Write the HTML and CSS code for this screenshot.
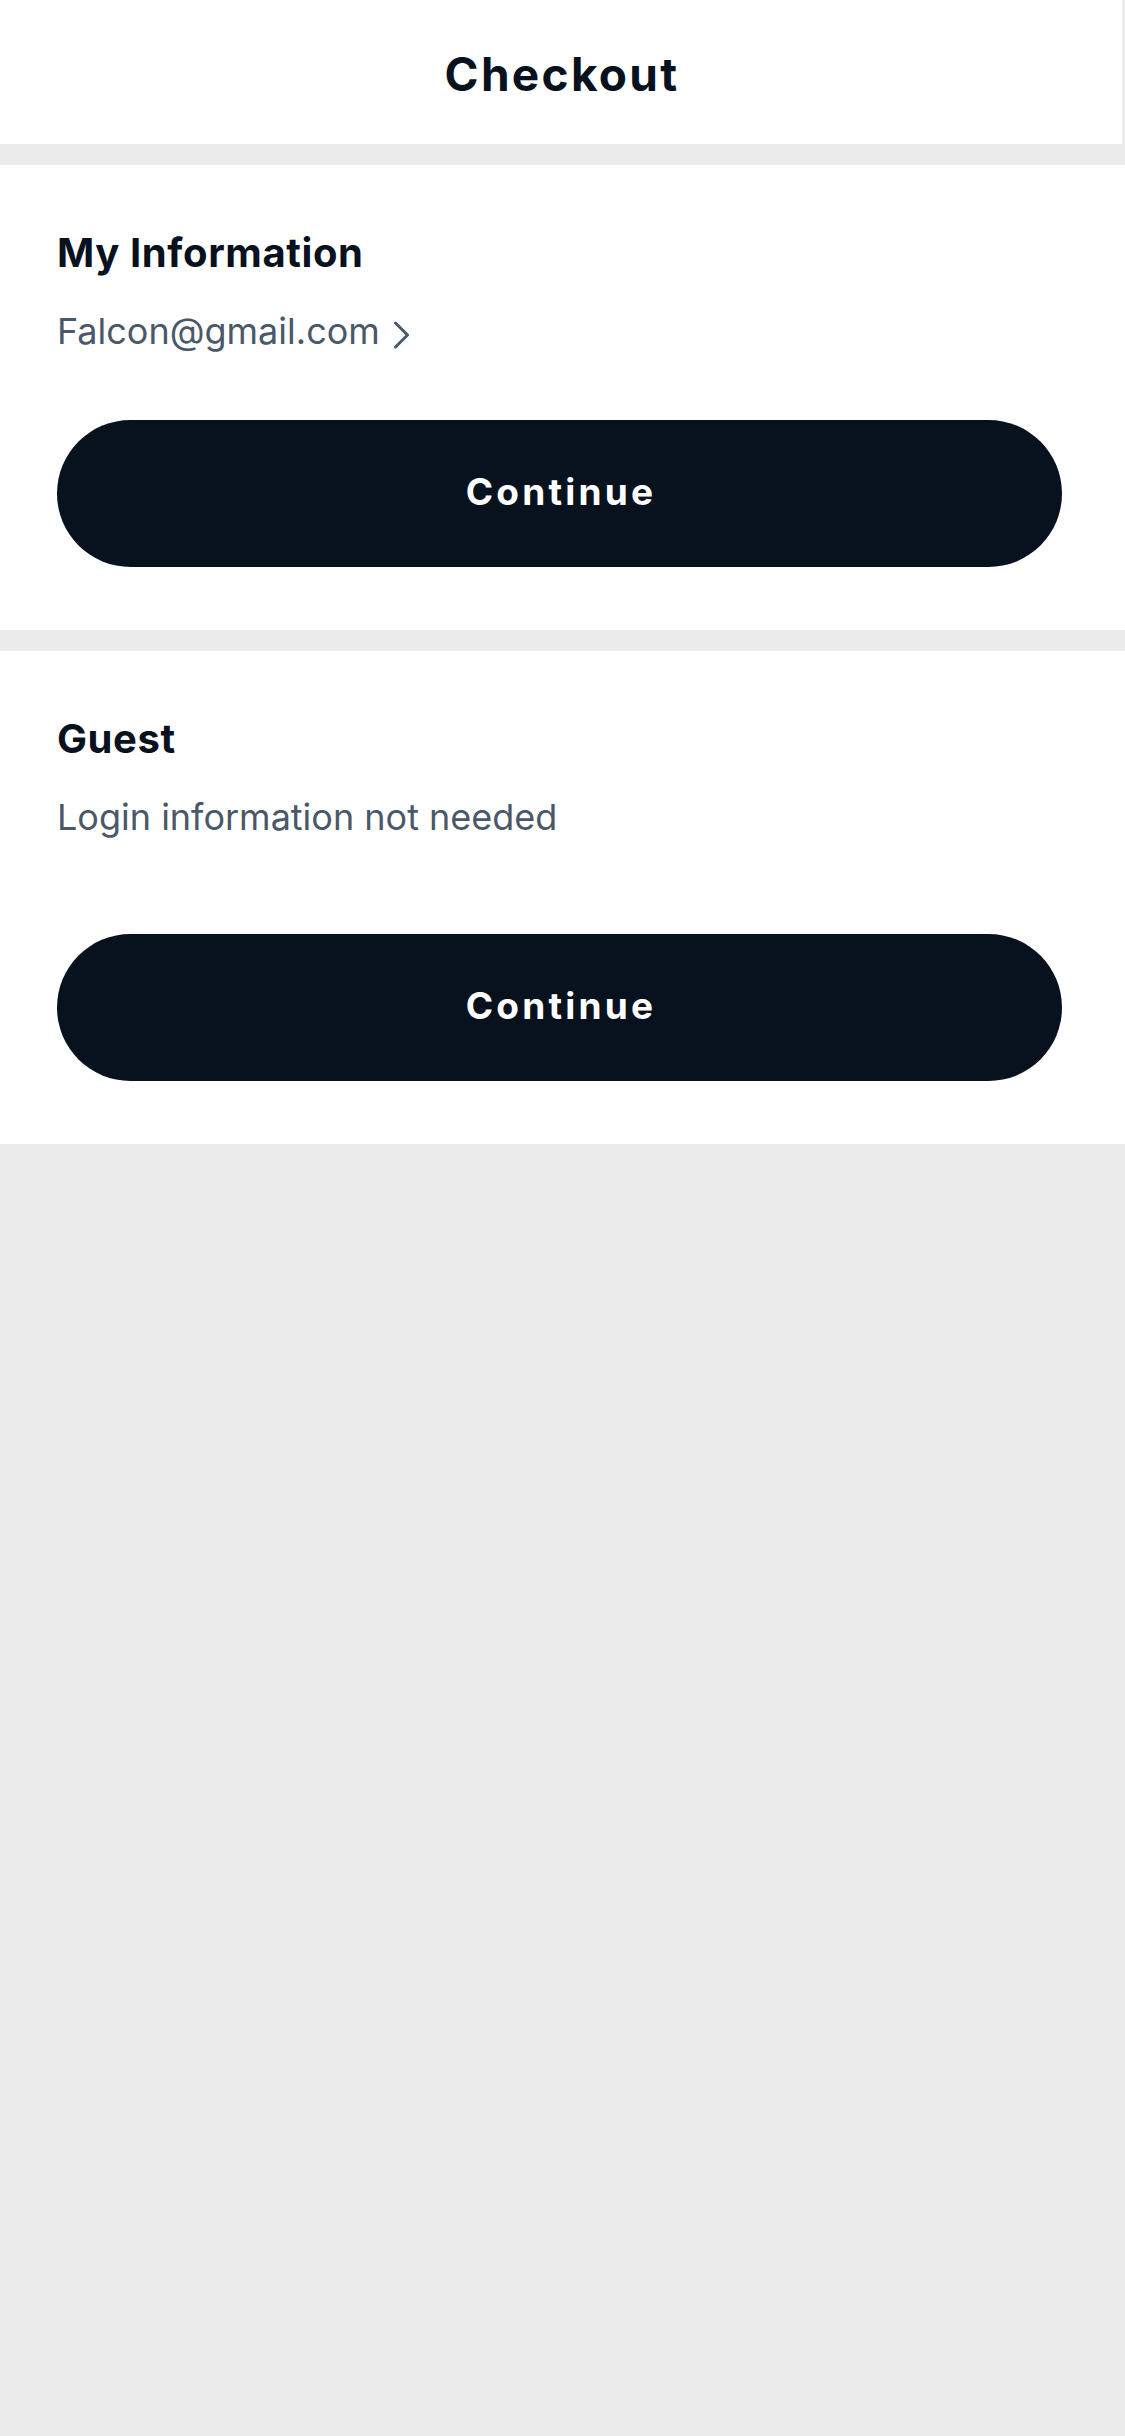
FILE: index.html
```html
<!DOCTYPE html>
<html lang="en">
<head>
<meta charset="utf-8">
<title>Checkout</title>
<link rel="stylesheet" href="styles.css">
</head>
<body>
<header class="topbar">
  <h1 class="topbar-title">Checkout</h1>
</header>
<main class="content">
  <section class="card">
    <h2 class="card-title">My Information</h2>
    <a class="card-link" href="#">
      <span class="card-sub">Falcon@gmail.com</span>
      <svg class="chevron" width="17" height="28" viewBox="0 0 17 28" aria-hidden="true">
        <path d="M2.5 2 L14.5 14 L2.5 26" fill="none" stroke="#4a5869" stroke-width="3" stroke-linecap="round" stroke-linejoin="round"/>
      </svg>
    </a>
    <button class="btn btn-first" type="button">Continue</button>
  </section>
  <section class="card">
    <h2 class="card-title">Guest</h2>
    <p class="card-sub card-sub-plain">Login information not needed</p>
    <button class="btn btn-second" type="button">Continue</button>
  </section>
</main>
</body>
</html>
```
FILE: styles.css
```css
* { box-sizing: border-box; }
html, body {
  margin: 0;
  padding: 0;
}
body {
  background: #ebebeb;
  min-height: 2436px;
  font-family: "Inter", "Noto Sans", sans-serif;
  color: #08121f;
}
.topbar {
  height: 144px;
  margin-right: 3px;
  background: #ffffff;
  display: flex;
  align-items: center;
  justify-content: center;
}
.topbar-title {
  margin: 0;
  font-family: "Inter", sans-serif;
  font-weight: 700;
  font-size: 46px;
  letter-spacing: 2.3px;
  line-height: 56px;
  color: #08121f;
  padding: 4px 0 0 2px;
}
.content {
  display: flex;
  flex-direction: column;
  gap: 21px;
  padding-top: 21px;
}
.card {
  background: #ffffff;
  padding: 65px 63px 63px 57px;
  display: flex;
  flex-direction: column;
  align-items: stretch;
}
.card-title {
  margin: 0;
  font-weight: 700;
  font-size: 40px;
  letter-spacing: 0.6px;
  line-height: 46px;
  color: #08121f;
}
.card-link {
  margin-top: 33px;
  display: flex;
  align-items: center;
  gap: 13px;
  text-decoration: none;
  height: 44px;
}
.card-sub {
  font-size: 36px;
  line-height: 44px;
  font-weight: 400;
  color: #4a5869;
}
.card-sub-plain {
  margin: 33px 0 0 0;
}
.chevron {
  display: block;
  margin-top: 8px;
}
.btn {
  display: flex;
  align-items: center;
  justify-content: center;
  height: 147px;
  border: none;
  border-radius: 74px;
  background: #08121f;
  color: #ffffff;
  font-family: "Inter", sans-serif;
  font-weight: 700;
  font-size: 37px;
  letter-spacing: 3.2px;
  padding: 0 0 4px 3px;
  width: 100%;
}
.btn-first { margin-top: 67px; }
.btn-second { margin-top: 95px; }
```
